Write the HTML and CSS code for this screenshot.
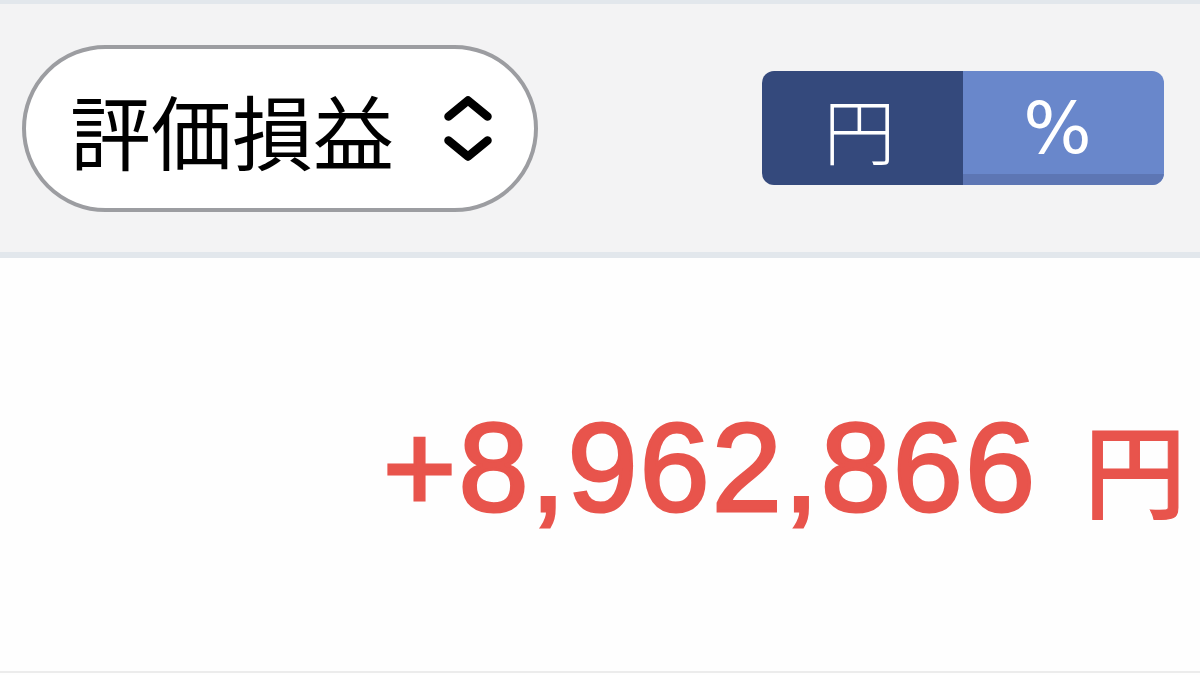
FILE: index.html
```html
<!DOCTYPE html>
<html lang="ja">
<head>
<meta charset="utf-8">
<link rel="stylesheet" href="styles.css">
</head>
<body>
<header class="header">
  <div class="select">
    <span class="select-label">評価損益</span>
    <svg class="chevrons" viewBox="0 0 48 65" width="48" height="65">
      <path d="M4.5 20.5 L24 4.5 L43.5 20.5" fill="none" stroke="#000" stroke-width="8.5" stroke-linecap="round" stroke-linejoin="round"/>
      <path d="M4.5 44.5 L24 60.5 L43.5 44.5" fill="none" stroke="#000" stroke-width="8.5" stroke-linecap="round" stroke-linejoin="round"/>
    </svg>
  </div>
  <div class="toggle">
    <span class="seg seg-on">円</span>
    <span class="seg seg-off">%</span>
  </div>
</header>
<main class="value">
  <span class="amount">+8,962,866 <span class="unit">円</span></span>
</main>
</body>
</html>
```
FILE: styles.css
```css
html, body {
  margin: 0;
  padding: 0;
  background: #fefefe;
  width: 1200px;
  height: 675px;
  overflow: hidden;
}
.header {
  box-sizing: border-box;
  height: 258px;
  background: #f3f3f4;
  border-top: 4px solid #e2e7ec;
  border-bottom: 6px solid #e2e7ec;
  display: flex;
  align-items: center;
  justify-content: space-between;
  padding: 0 36px 0 22px;
}
.select {
  box-sizing: border-box;
  width: 516px;
  height: 167px;
  border: 4px solid #9c9da1;
  border-radius: 84px;
  background: #fff;
  display: flex;
  align-items: center;
  padding-left: 44px;
  gap: 50px;
}
.select-label {
  font-family: "Noto Sans CJK JP", sans-serif;
  font-size: 81px;
  color: #000;
  line-height: 1;
}
.chevrons {
  display: block;
}
.toggle {
  display: flex;
  width: 402px;
  height: 114px;
  border-radius: 12px;
  overflow: hidden;
}
.seg {
  box-sizing: border-box;
  flex: none;
  width: 201px;
  display: flex;
  align-items: center;
  justify-content: center;
  color: #fff;
  line-height: 1;
}
.seg-on {
  background: #34497c;
  font-family: "Noto Sans CJK JP", sans-serif;
  font-size: 72px;
  font-weight: 300;
  padding-right: 6px;
}
.seg-off {
  background: #6987cb;
  box-shadow: inset 0 -11px 0 #5d76b4;
  font-size: 72px;
  font-weight: 400;
  font-family: "DejaVu Sans", sans-serif;
  padding-right: 12px;
}
.value {
  box-sizing: border-box;
  height: 415px;
  border-bottom: 2px solid #ececec;
  display: flex;
  align-items: center;
  justify-content: flex-end;
  padding-right: 14px;
}
.amount {
  font-family: "Liberation Sans", Arial, sans-serif;
  font-size: 126px;
  color: #e8544c;
  line-height: 1;
  letter-spacing: 2px;
  white-space: nowrap;
  -webkit-text-stroke: 3px #e8544c;
  position: relative;
  top: 3px;
}
.unit {
  font-family: "Noto Sans CJK JP", sans-serif;
  font-size: 102px;
  font-weight: 500;
  margin-left: 10px;
  letter-spacing: 0;
  -webkit-text-stroke: 1px #e8544c;
}
```
